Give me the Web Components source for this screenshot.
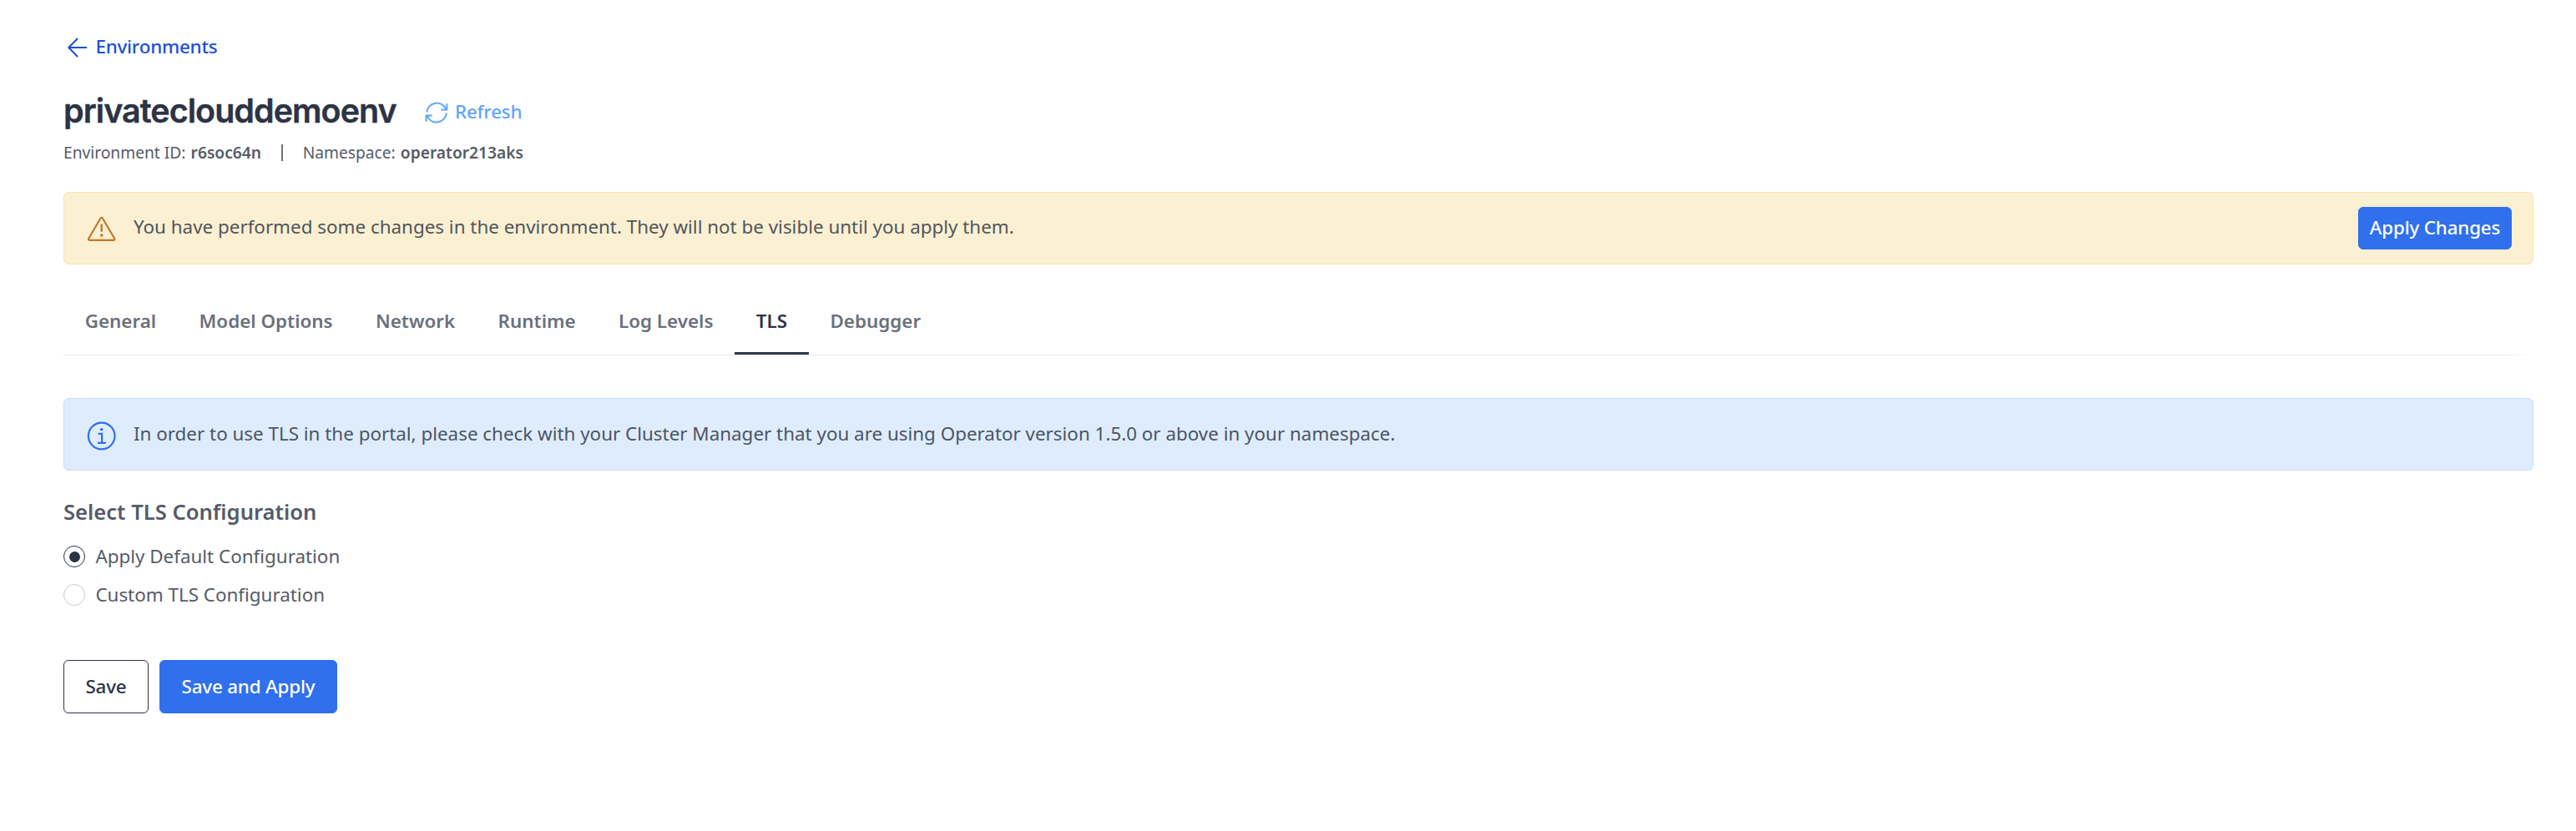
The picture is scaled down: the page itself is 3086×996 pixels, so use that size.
<!DOCTYPE html>
<html lang="en">
<head>
<meta charset="utf-8">
<title>privateclouddemoenv</title>
<style>
html, body { margin: 0; background: #fff; }
body { font-family: "Noto Sans", sans-serif; font-size: 22.4px; line-height: 32px; color: #565b67; }
</style>
</head>
<body>
<environment-page></environment-page>
<script>
const define = (name, html) => customElements.define(name, class extends HTMLElement {
  constructor() {
    super();
    this.attachShadow({ mode: "open" }).innerHTML = html;
  }
});

define("nav-link", `
<style>
:host { display: inline-flex; align-items: flex-start; font-weight: 500; letter-spacing: -0.22px; white-space: nowrap; }
::slotted(svg) { display: block; flex: none; }
.label { padding-top: 1px; }
</style>
<slot name="icon"></slot><span class="label"><slot></slot></span>`);

define("action-button", `
<style>
:host { display: inline-flex; flex: none; min-width: 102px; }
button { box-sizing: border-box; width: 100%; height: 64px; padding: 0 24px; border: 1px solid #3070ec; border-radius: 6px;
  background: #3070ec; color: #fff; font: inherit; font-weight: 500; letter-spacing: -0.18px; line-height: 32px; white-space: nowrap; }
:host([compact]) { min-width: 184px; }
:host([compact]) button { height: 51px; padding: 0 11px 1px; }
:host([wide]) { min-width: 213px; }
:host([outline]) button { background: #fff; color: #2d3344; border-color: #2d3344; }
</style>
<button><slot></slot></button>`);

define("alert-banner", `
<style>
:host { display: flex; box-sizing: border-box; height: 87px; padding: 0 25px; border: 1px solid #fbe5a6;
  border-radius: 6px; background: #fcf0d3; color: #50565a; }
:host([info]) { background: #dfecfd; border-color: #c5dffa; color: #4b5565; }
::slotted(svg) { display: block; flex: none; width: 40px; height: 40px; margin: 24px 18px 0 0; }
.text { flex: 1; padding-top: 25px; }
:host([info]) .text { padding-top: 26px; }
::slotted(action-button) { align-self: center; }
</style>
<slot name="icon"></slot><div class="text"><slot></slot></div><slot name="action"></slot>`);

define("tab-item", `
<style>
:host { display: block; box-sizing: border-box; height: 57px; padding: 1px 25.7px 0; border-bottom: 3px solid transparent;
  font-weight: 600; color: #6b707d; white-space: nowrap; }
:host([active]) { color: #2d3344; border-color: #2e3a49; }
</style>
<slot></slot>`);

define("tab-bar", `
<style>
:host { display: block; }
nav { display: flex; }
.rule { height: 1px; background: linear-gradient(to right, #e4e5e7 calc(100% - 51px), #fff); }
</style>
<nav><slot></slot></nav><div class="rule"></div>`);

define("radio-option", `
<style>
:host { display: flex; align-items: center; gap: 12.4px; height: 32px; }
.ring { box-sizing: border-box; width: 26px; height: 26px; border: 1px solid #c8cacf; border-radius: 50%;
  display: grid; place-items: center; }
:host([checked]) .ring { border-color: #2d3344; }
:host([checked]) .ring::after { content: ""; width: 13px; height: 13px; border-radius: 50%; background: #2d3344; }
</style>
<span class="ring"></span><slot></slot>`);

define("environment-page", `
<style>
:host { display: flex; flex-direction: column; box-sizing: border-box; min-height: 996px; padding: 39px 51px 0 76px; }
.back { align-self: flex-start; height: 32px; color: #1d4fd8; }
.back svg { margin-right: 6.4px; }
.heading { display: flex; align-items: center; height: 48px; margin-top: 38px; }
h1 { flex: none; width: 399px; margin: 0 32px 0 0; font: 600 39.4px/48px Inter, sans-serif; letter-spacing: -0.92px; color: #2d3344; -webkit-text-stroke: 0.4px #2d3344; }
.refresh { height: 32px; color: #60a5fa; }
.refresh svg { margin: 2px 6px 0 0; }
.meta { display: flex; align-items: center; margin-top: 13px; height: 26px; font-size: 19.2px; line-height: 26px; white-space: pre; }
.meta b { font-weight: 600; margin-left: 1.2px; }
.meta i { width: 2px; height: 20px; margin: 0 23.4px 0 24.2px; background: #6b707b; }
.changes { margin-top: 34px; }
tab-bar { margin-top: 51px; }
.info { margin-top: 51px; }
h2 { margin: 31px 0 0; font-size: 25.6px; line-height: 38px; font-weight: 600; }
.options { display: flex; flex-direction: column; gap: 14px; margin-top: 18px; }
.buttons { display: flex; gap: 13px; margin-top: 62px; }
</style>
<nav-link class="back">
  <svg slot="icon" width="32" height="32" viewBox="0 0 32 32" fill="none" stroke="currentColor" stroke-width="2" stroke-linecap="round" stroke-linejoin="round"><path d="M16.6 7.5 6.2 18 16.6 28.5M6.2 18H27.3"/></svg>Environments
</nav-link>
<div class="heading">
  <h1>privateclouddemoenv</h1>
  <nav-link class="refresh">
    <svg slot="icon" width="32" height="32" viewBox="0 0 32 32" fill="none" stroke="currentColor" stroke-width="2"><path d="M4.2 15.5A12 12 0 0 1 27.2 11.8M28.4 5.2V12.6H21.3M27.8 16.5A12 12 0 0 1 4.8 20.2M3.6 26.8V19.4H10.7"/></svg>Refresh
  </nav-link>
</div>
<div class="meta"><span>Environment ID: </span><b>r6soc64n</b><i></i><span>Namespace: </span><b>operator213aks</b></div>
<alert-banner class="changes">
  <svg slot="icon" viewBox="0 0 40 40" fill="none" stroke="#c27825" stroke-width="2.2" stroke-linecap="round" stroke-linejoin="round"><path d="M18.4 6.8Q19.7 5 21 6.8L35.1 30.7Q36 32.8 33.7 32.8H5.7Q3.4 32.8 4.3 30.7Z"/><path d="M19.7 14.5V21.8" stroke-width="2.4"/><circle cx="19.7" cy="27" r="1.8" fill="#c27825" stroke="none"/></svg>
  You have performed some changes in the environment. They will not be visible until you apply them.
  <action-button slot="action" compact>Apply Changes</action-button>
</alert-banner>
<tab-bar>
  <tab-item>General</tab-item><tab-item>Model Options</tab-item><tab-item>Network</tab-item><tab-item>Runtime</tab-item><tab-item>Log Levels</tab-item><tab-item active>TLS</tab-item><tab-item>Debugger</tab-item>
</tab-bar>
<alert-banner class="info" info>
  <svg slot="icon" viewBox="0 0 40 40" fill="none" stroke="#3070ec" stroke-width="2.2"><circle cx="19.7" cy="20.5" r="15.8"/><path d="M15.7 17.8H20.1V28.8M14.9 28.9H24.9"/><circle cx="19.7" cy="12.8" r="1.8" fill="#3070ec" stroke="none"/></svg>
  In order to use TLS in the portal, please check with your Cluster Manager that you are using Operator version 1.5.0 or above in your namespace.
</alert-banner>
<h2>Select TLS Configuration</h2>
<div class="options">
  <radio-option checked>Apply Default Configuration</radio-option>
  <radio-option>Custom TLS Configuration</radio-option>
</div>
<div class="buttons">
  <action-button outline>Save</action-button>
  <action-button wide>Save and Apply</action-button>
</div>`);
</script>
</body>
</html>
